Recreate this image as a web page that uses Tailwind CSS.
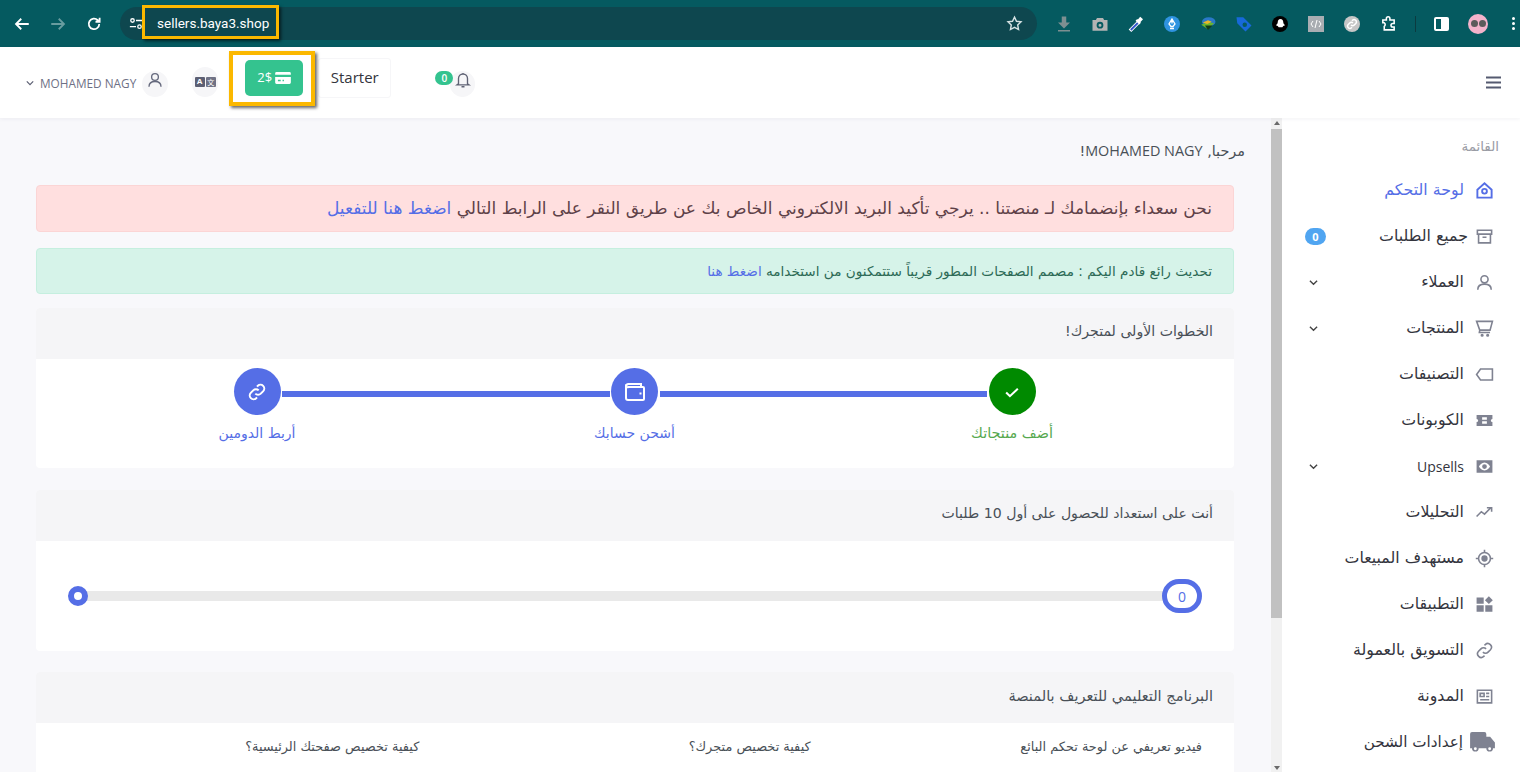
<!DOCTYPE html>
<html lang="ar">
<head>
  <meta charset="UTF-8" />
  <meta name="viewport" content="width=device-width, initial-scale=1.0" />
  <title>Baya3 - لوحة التحكم</title>
  <script src="https://cdn.jsdelivr.net/npm/@tailwindcss/browser@4"></script>
</head>
<body class="relative w-[1520px] h-[772px] overflow-hidden bg-white font-['Noto_Sans','DejaVu_Sans',sans-serif]">

  <!-- browser bar -->
  <div class="h-[47px] bg-[#055a60] flex items-center pl-[13px]">
    <svg class="w-[18px] h-[18px] text-white" viewBox="0 0 24 24" fill="none" stroke="currentColor" stroke-width="2.4"><path d="M21 12H4M11 5l-7 7 7 7"/></svg>
    <svg class="w-[18px] h-[18px] ml-[18px] text-white/40" viewBox="0 0 24 24" fill="none" stroke="currentColor" stroke-width="2.4"><path d="M3 12h17M13 5l7 7-7 7"/></svg>
    <svg class="w-[18px] h-[18px] ml-[18px] text-white" viewBox="0 0 24 24" fill="none" stroke="currentColor" stroke-width="2.4"><path d="M19 12a7 7 0 1 1-2-5l2 2M19.500 3.500V9H14"/></svg>
    <div class="ml-[17px] w-[917px] h-[33px] rounded-full bg-[#0e474f] flex items-center pl-[9px] pr-[14px]">
      <svg class="w-[14px] h-[14px] text-white" viewBox="0 0 16 16" fill="none" stroke="currentColor" stroke-width="1.500"><circle cx="4" cy="4" r="2"/><path d="M8 4h7M1 11h7"/><circle cx="12" cy="11" r="2"/></svg>
      <span class="ml-[14px] text-[13.500px] text-white font-['Roboto',sans-serif]">sellers.baya3.shop</span>
      <svg class="ml-auto w-[17px] h-[17px] text-[#d5e2e3]" viewBox="0 0 24 24" fill="none" stroke="currentColor" stroke-width="2"><path d="M12 3l2.800 5.900 6.400.8-4.700 4.400 1.200 6.400L12 17.400l-5.700 3.100 1.200-6.400L2.800 9.700l6.400-.8z"/></svg>
    </div>
    <div class="ml-[9px] grid grid-flow-col auto-cols-[36px] justify-items-center items-center">
      <svg class="w-[18px] h-[18px] text-[#7d8f91]" viewBox="0 0 24 24" fill="currentColor"><path d="M9 2h6v8h5l-8 8-8-8h5zM4 20h16v2H4z"/></svg>
      <svg class="w-[18px] h-[18px] text-[#b4b4b4]" viewBox="0 0 24 24" fill="currentColor"><path fill-rule="evenodd" d="M8 4h8l1.500 2.500H22V21H2V6.500h4.500zM12 9a4.500 4.500 0 1 0 0 9 4.500 4.500 0 0 0 0-9zm0 2.500a2 2 0 1 1 0 4 2 2 0 0 1 0-4z"/></svg>
      <svg class="w-[18px] h-[18px]" viewBox="0 0 24 24" fill="none"><path d="M4 21L15 10" stroke="#fff" stroke-width="5"/><path d="M5 20l10-10" stroke="#2f55c9" stroke-width="2.400"/><path d="M12.500 6.500l5 5" stroke="#fff" stroke-width="3"/><path d="M15.500 8.500l4-4.500" stroke="#fff" stroke-width="5"/></svg>
      <div class="w-4 h-4 rounded-full bg-[#2f93e0] flex items-center justify-center"><svg class="w-3 h-3" viewBox="0 0 12 12" fill="none" stroke="#fff" stroke-width="1.300"><path d="M6 1l3 5-2 2.500H5L3 6zM6 5.500V1M4 10.500h4"/></svg></div>
      <svg class="w-[18px] h-[18px]" viewBox="0 0 24 24"><ellipse cx="13" cy="9" rx="9" ry="6" fill="#2a78c8"/><path d="M3 13l9-4 8 2-8 8z" fill="#68b52e"/><path d="M8 14h10l-6 6z" fill="#123d18"/><path d="M5 10l7-3 5 2-6 3z" fill="#e6b62a"/></svg>
      <svg class="w-[18px] h-[18px] text-[#1769d9]" viewBox="0 0 24 24" fill="currentColor"><path fill-rule="evenodd" d="M2 3h9l11 11-8 8L3 11zm11 7a3 3 0 1 0 0 6 3 3 0 0 0 0-6z"/></svg>
      <div class="w-4 h-4 rounded-full bg-black flex items-center justify-center"><svg class="w-[11px] h-[11px]" viewBox="0 0 12 12" fill="#fff"><path d="M6 1c2 0 3 1.500 3 3.500 0 2 2 3 2 3.500l-2 .6-1 1.400H4L3 8.600 1 8c0-.5 2-1.500 2-3.500S4 1 6 1z"/></svg></div>
      <div class="w-4 h-4 bg-[#a9adb2] flex items-center justify-center text-white"><svg class="w-3 h-3" viewBox="0 0 12 12" fill="none" stroke="currentColor" stroke-width="1"><path d="M3 3L1 6l2 3M9 3l2 3-2 3M7 2L5 10"/></svg></div>
      <div class="w-4 h-4 rounded-full bg-[#c6c6c6] flex items-center justify-center text-white"><svg class="w-3 h-3" viewBox="0 0 24 24" fill="none" stroke="currentColor" stroke-width="3"><path d="M10 14a4.500 4.500 0 0 0 6.500 0l3-3A4.600 4.600 0 0 0 13 4.500l-1 1"/><path d="M14 10a4.500 4.500 0 0 0-6.500 0l-3 3a4.600 4.600 0 0 0 6.500 6.500l1-1"/></svg></div>
      <svg class="w-[17px] h-[17px] text-white" viewBox="0 0 24 24" fill="none" stroke="currentColor" stroke-width="2.200"><path d="M4 7h5V5a2.500 2.500 0 0 1 5 0v2h6v5h-2a2.500 2.500 0 0 0 0 5h2v4H6v-5a3 3 0 0 0 0-5H4z"/></svg>
    </div>
    <div class="ml-[9px] w-px h-4 bg-[#0b3b40]"></div>
    <div class="ml-[18px] w-[15px] h-[14px] border-2 border-white rounded-[2px] flex justify-end"><div class="w-[6px] bg-white"></div></div>
    <div class="ml-[19px] w-5 h-5 rounded-full bg-[#f3b3cb] flex items-center justify-center gap-px"><span class="w-[7px] h-[7px] rounded-full bg-[#5b5b5b]"></span><span class="w-[7px] h-[7px] rounded-full bg-[#5b5b5b]"></span></div>
    <div class="ml-[24px] flex flex-col gap-[2px]"><span class="w-[3px] h-[3px] rounded-full bg-white"></span><span class="w-[3px] h-[3px] rounded-full bg-white"></span><span class="w-[3px] h-[3px] rounded-full bg-white"></span></div>
  </div>

  <!-- app header -->
  <header class="relative z-10 h-[71px] bg-white shadow-[0_1px_4px_rgba(40,40,80,0.06)] flex items-start pl-[26px] pr-[19px]">
    <svg class="mt-[32px] w-2 h-2 text-[#5c5f73]" viewBox="0 0 10 10" fill="none" stroke="currentColor" stroke-width="1.500"><path d="M1 3l4 4 4-4"/></svg>
    <span class="ml-[6px] mt-[27px] text-[11.800px] leading-[18px] text-[#6e7085] font-['Open_Sans',sans-serif]">MOHAMED NAGY</span>
    <div class="ml-[6px] mt-[24px] w-[26px] h-[26px] rounded-full bg-[#f6f6f8] flex justify-center">
      <svg class="w-[18px] h-[18px] text-[#666a7e]" viewBox="0 0 24 24" fill="none" stroke="currentColor" stroke-width="1.800"><circle cx="12" cy="8" r="4.500"/><path d="M4 21c0-5 3.500-7 8-7s8 2 8 7"/></svg>
    </div>
    <div class="ml-[24px] mt-[20px] w-[26px] h-[30px] rounded-full bg-[#f6f6f8] flex items-center justify-center gap-px">
      <span class="w-[10px] h-[10px] bg-[#5c5f73] rounded-[1px] text-white text-[8px] leading-[10px] text-center font-bold font-['Liberation_Sans',sans-serif]">A</span>
      <span class="w-[10px] h-[10px] bg-[#6f7285] rounded-[1px] text-white text-[7px] leading-[10px] text-center font-['Noto_Sans_CJK_SC',sans-serif]">文</span>
    </div>
    <div class="ml-[27px] mt-[13px] w-[58px] h-[36px] rounded-[5px] bg-[#34c38f] flex items-center justify-center gap-[3px] text-white">
      <span class="text-[13px] font-['Open_Sans',sans-serif]">2$</span>
      <svg class="w-[16px] h-[12px]" viewBox="0 0 17 13" fill="currentColor"><path fill-rule="evenodd" d="M1.500 0h14A1.500 1.500 0 0 1 17 1.500V3H0V1.500A1.500 1.500 0 0 1 1.500 0zM0 5.500h17v6a1.500 1.500 0 0 1-1.500 1.500h-14A1.500 1.500 0 0 1 0 11.500zM3 8.500V10h3V8.500zm5 0V10h1.500V8.500z"/></svg>
    </div>
    <div class="ml-[15px] mt-[11px] w-[73px] h-[40px] pb-[2px] rounded-[3px] border border-[#f6f6f8] flex items-center justify-center text-[15px] text-[#33343d] font-['Open_Sans',sans-serif]">Starter</div>
    <div class="relative ml-[59px] mt-[24px] w-[25px] h-[26px] rounded-full bg-[#f6f6f8] flex justify-center">
      <svg class="w-[18px] h-[18px] text-[#5f6274]" viewBox="0 0 24 24" fill="none" stroke="currentColor" stroke-width="1.800"><path d="M6 17V10a6 6 0 0 1 12 0v7l2 1.500H4zM10 21h4M12 4V2.500"/></svg>
      <span class="absolute left-[-15px] top-0 w-[18px] h-[14px] rounded-full bg-[#34c38f] text-white text-[10px] leading-[14px] font-semibold text-center font-['Open_Sans',sans-serif]">0</span>
    </div>
    <svg class="ml-auto mt-[29px] w-[15px] h-[13px] text-[#555a70]" viewBox="0 0 15 13" fill="none" stroke="currentColor" stroke-width="2"><path d="M0 1.500h15M0 6.500h15M0 11.500h15"/></svg>
  </header>

  <div class="flex h-[654px]">
    <!-- main column -->
    <main dir="rtl" class="w-[1271px] bg-[#f8f8fb] overflow-hidden pr-[37px] pl-[36px] pt-[24px] font-['DejaVu_Sans',sans-serif]">
      <p class="mr-[-11px] text-[14.400px] leading-[18px] text-[#495057]">مرحبا, <span class="font-['Open_Sans',sans-serif]">MOHAMED NAGY</span>!</p>

      <div class="mt-[25px] h-[47px] rounded-[4px] border border-[#fbd5d5] bg-[#ffdfdf] flex items-center px-[21px] text-[17px] text-[#5e4148] whitespace-nowrap">
        <span>نحن سعداء بإنضمامك لـ منصتنا .. يرجي تأكيد البريد الالكتروني الخاص بك عن طريق النقر على الرابط التالي <a class="text-[#556ee6]">اضغط هنا للتفعيل</a></span>
      </div>
      <div class="mt-[16px] h-[46px] rounded-[4px] border border-[#c5efdf] bg-[#d6f3e9] flex items-center px-[21px] text-[13.600px] text-[#2d6a56] whitespace-nowrap">
        <span>تحديث رائع قادم اليكم : مصمم الصفحات المطور قريباً ستتمكنون من استخدامه <a class="text-[#556ee6]">اضغط هنا</a></span>
      </div>

      <section class="mt-[14px] rounded-[4px] overflow-hidden bg-white">
        <h2 class="h-[51px] pb-[4px] bg-[#f5f5f7] flex items-center px-[21px] text-[14.100px] text-[#495057]">الخطوات الأولى لمتجرك!</h2>
        <div class="h-[109px] pr-[222px] pl-[221px] pt-[9px] flex items-start">
          <div class="w-[0px] flex flex-col items-center">
            <div class="w-[47px] h-[47px] shrink-0 rounded-full bg-[#008a00] flex items-center justify-center text-white">
              <svg class="w-[20px] h-[20px]" viewBox="0 0 24 24" fill="none" stroke="currentColor" stroke-width="2.500"><path d="M5 12.500l4.500 4.500L19 8"/></svg>
            </div>
            <span class="mt-[8px] text-[14.400px] text-[#55a84e] whitespace-nowrap">أضف منتجاتك</span>
          </div>
          <div class="flex-1 h-[6px] mt-[23px] mx-[25px] bg-[#556ee6]"></div>
          <div class="w-[0px] flex flex-col items-center">
            <div class="w-[47px] h-[47px] shrink-0 rounded-full bg-[#556ee6] flex items-center justify-center text-white">
              <svg class="w-[24px] h-[24px]" viewBox="0 0 24 24" fill="none" stroke="currentColor" stroke-width="2"><path d="M3 6.500A2.500 2.500 0 0 1 5.500 4H18v3M3 6.500V18a2 2 0 0 0 2 2h15a1 1 0 0 0 1-1V8a1 1 0 0 0-1-1H5.500A2.500 2.500 0 0 1 3 6.500z"/><path d="M17.500 12.500v2"/></svg>
            </div>
            <span class="mt-[8px] text-[14px] text-[#556ee6] whitespace-nowrap">أشحن حسابك</span>
          </div>
          <div class="flex-1 h-[6px] mt-[23px] mx-[25px] bg-[#556ee6]"></div>
          <div class="w-[0px] flex flex-col items-center">
            <div class="w-[47px] h-[47px] shrink-0 rounded-full bg-[#556ee6] flex items-center justify-center text-white">
              <svg class="w-[20px] h-[20px]" viewBox="0 0 24 24" fill="none" stroke="currentColor" stroke-width="2.400"><path d="M10 14a4.500 4.500 0 0 0 6.500 0l3-3A4.600 4.600 0 0 0 13 4.500l-1 1"/><path d="M14 10a4.500 4.500 0 0 0-6.500 0l-3 3a4.600 4.600 0 0 0 6.500 6.500l1-1"/></svg>
            </div>
            <span class="mt-[8px] text-[14px] text-[#556ee6] whitespace-nowrap">أربط الدومين</span>
          </div>
        </div>
      </section>

      <section class="mt-[22px] rounded-[4px] overflow-hidden bg-white">
        <h2 class="h-[51px] pb-[4px] bg-[#f5f5f7] flex items-center px-[21px] text-[14.100px] text-[#495057]">أنت على استعداد للحصول على أول 10 طلبات</h2>
        <div class="h-[110px] pt-[50px] pl-[33px] pr-[32px]">
          <div class="relative h-[10px] bg-[#e9e9e9] rounded-full mx-[10px]">
            <span class="absolute right-[-10px] top-[-12px] w-[40px] h-[34px] rounded-full border-[5px] border-[#556ee6] bg-white flex items-center justify-center text-[14px] text-[#556ee6] font-['Open_Sans',sans-serif]">0</span>
            <span class="absolute left-[-11px] top-[-5px] w-[20px] h-[20px] rounded-full border-[6px] border-[#556ee6] bg-white"></span>
          </div>
        </div>
      </section>

      <section class="mt-[21px] rounded-[4px] overflow-hidden bg-white">
        <h2 class="h-[51px] pb-[4px] bg-[#f5f5f7] flex items-center px-[21px] text-[14.600px] text-[#495057]">البرنامج التعليمي للتعريف بالمنصة</h2>
        <div class="h-[60px] grid grid-cols-3 pt-[14px] text-[12.900px] text-[#495057]">
          <span class="pr-[32px]">فيديو تعريفي عن لوحة تحكم البائع</span>
          <span class="pr-[24px]">كيفية تخصيص متجرك؟</span>
          <span class="pr-[16px]">كيفية تخصيص صفحتك الرئيسية؟</span>
        </div>
      </section>
    </main>

    <!-- page scrollbar -->
    <div class="w-[11px] bg-[#f1f1f1] flex flex-col items-center">
      <span class="mt-[3px] w-0 h-0 border-x-[3px] border-x-transparent border-b-[4px] border-b-[#6a6a6a]"></span>
      <div class="mt-[4px] w-full h-[489px] bg-[#c1c1c1]"></div>
      <span class="mt-auto mb-[2px] w-0 h-0 border-x-[3px] border-x-transparent border-t-[4px] border-t-[#6a6a6a]"></span>
    </div>

    <!-- sidebar -->
    <aside dir="rtl" class="flex-1 bg-white pt-[19px] font-['DejaVu_Sans',sans-serif] text-[15.800px] text-[#33343d]">
      <p class="pr-[21px] text-[13.500px] leading-[18px] text-[#9a9ca5] pb-[12px]">القائمة</p>
      <nav class="flex flex-col pr-[26px]">
        <a class="h-[46px] flex items-center gap-[11px] text-[#556ee6]">
          <svg class="w-[19px] h-[19px] shrink-0" viewBox="0 0 24 24" fill="none" stroke="currentColor" stroke-width="2.400"><path d="M3 11l9-8 9 8v10H3z"/><circle cx="12" cy="13" r="3"/></svg>
          <span>لوحة التحكم</span>
        </a>
        <a class="h-[46px] flex items-center gap-[7px]">
          <svg class="w-[19px] h-[19px] shrink-0 text-[#7f8291]" viewBox="0 0 24 24" fill="none" stroke="currentColor" stroke-width="2"><path d="M3 4h18v5H3zM4.500 9v11h15V9M9.500 13h5"/></svg>
          <span>جميع الطلبات</span>
          <span class="mr-auto ml-[23px] w-[21px] h-[17px] rounded-full bg-[#50a5f1] text-white text-[11px] leading-[17px] font-bold text-center font-['Open_Sans',sans-serif]">0</span>
        </a>
        <a class="h-[46px] flex items-center gap-[11px]">
          <svg class="w-[19px] h-[19px] shrink-0 text-[#7f8291]" viewBox="0 0 24 24" fill="none" stroke="currentColor" stroke-width="2"><circle cx="12" cy="8" r="4.500"/><path d="M3.500 21c0-5 3.500-7 8.500-7s8.500 2 8.500 7"/></svg>
          <span>العملاء</span>
          <svg class="mr-auto ml-[27px] w-[9px] h-[9px] text-[#444]" viewBox="0 0 10 10" fill="none" stroke="currentColor" stroke-width="1.500"><path d="M1 3l4 4 4-4"/></svg>
        </a>
        <a class="h-[46px] flex items-center gap-[11px]">
          <svg class="w-[19px] h-[19px] shrink-0 text-[#7f8291]" viewBox="0 0 24 24" fill="none" stroke="currentColor" stroke-width="2"><path d="M2 3h20l-3 11H6zM6 14l-.5 3H19"/><circle cx="9" cy="20.500" r="1" fill="currentColor"/><circle cx="16" cy="20.500" r="1" fill="currentColor"/></svg>
          <span>المنتجات</span>
          <svg class="mr-auto ml-[27px] w-[9px] h-[9px] text-[#444]" viewBox="0 0 10 10" fill="none" stroke="currentColor" stroke-width="1.500"><path d="M1 3l4 4 4-4"/></svg>
        </a>
        <a class="h-[46px] flex items-center gap-[11px]">
          <svg class="w-[19px] h-[19px] shrink-0 text-[#7f8291]" viewBox="0 0 24 24" fill="none" stroke="currentColor" stroke-width="2"><path d="M7 5h15v14H7l-5-7z"/></svg>
          <span>التصنيفات</span>
        </a>
        <a class="h-[46px] flex items-center gap-[11px]">
          <svg class="w-[19px] h-[19px] shrink-0 text-[#7f8291]" viewBox="0 0 24 24" fill="currentColor"><path fill-rule="evenodd" d="M2 5h20v5a2 2 0 0 0 0 4v5H2v-5a2 2 0 0 0 0-4zm7 3v3h6V8zm0 5v3h6v-3z"/></svg>
          <span>الكوبونات</span>
        </a>
        <a class="h-[46px] flex items-center gap-[11px]">
          <svg class="w-[19px] h-[19px] shrink-0 text-[#7f8291]" viewBox="0 0 24 24" fill="currentColor"><path fill-rule="evenodd" d="M2 4h20v16H2zm10 3c-3.500 0-6 3-7 5 1 2 3.500 5 7 5s6-3 7-5c-1-2-3.500-5-7-5zm0 2a3 3 0 1 1 0 6 3 3 0 0 1 0-6z"/></svg>
          <span class="text-[14px] font-['Open_Sans',sans-serif]">Upsells</span>
          <svg class="mr-auto ml-[27px] w-[9px] h-[9px] text-[#444]" viewBox="0 0 10 10" fill="none" stroke="currentColor" stroke-width="1.500"><path d="M1 3l4 4 4-4"/></svg>
        </a>
        <a class="h-[46px] flex items-center gap-[11px]">
          <svg class="w-[19px] h-[19px] shrink-0 text-[#7f8291]" viewBox="0 0 24 24" fill="none" stroke="currentColor" stroke-width="2"><path d="M2 17l6-6 4 3 8-8M15 6h6v5"/></svg>
          <span>التحليلات</span>
        </a>
        <a class="h-[46px] flex items-center gap-[11px]">
          <svg class="w-[19px] h-[19px] shrink-0 text-[#7f8291]" viewBox="0 0 24 24" fill="none" stroke="currentColor" stroke-width="2"><circle cx="12" cy="12" r="7.500"/><circle cx="12" cy="12" r="3" fill="currentColor"/><path d="M12 1v3M12 20v3M1 12h3M20 12h3"/></svg>
          <span>مستهدف المبيعات</span>
        </a>
        <a class="h-[46px] flex items-center gap-[11px]">
          <svg class="w-[19px] h-[19px] shrink-0 text-[#7f8291]" viewBox="0 0 24 24" fill="currentColor"><path d="M2 3h9v8H2zM2 13h9v8H2zM13 13h9v8h-9zM17.500 1.500l5 5-5 5-5-5z"/></svg>
          <span>التطبيقات</span>
        </a>
        <a class="h-[46px] flex items-center gap-[11px]">
          <svg class="w-[19px] h-[19px] shrink-0 text-[#7f8291]" viewBox="0 0 24 24" fill="none" stroke="currentColor" stroke-width="2"><path d="M10 14a4.500 4.500 0 0 0 6.500 0l3-3A4.600 4.600 0 0 0 13 4.500l-1 1"/><path d="M14 10a4.500 4.500 0 0 0-6.500 0l-3 3a4.600 4.600 0 0 0 6.500 6.500l1-1"/></svg>
          <span>التسويق بالعمولة</span>
        </a>
        <a class="h-[46px] flex items-center gap-[11px]">
          <svg class="w-[19px] h-[19px] shrink-0 text-[#7f8291]" viewBox="0 0 24 24" fill="none" stroke="currentColor" stroke-width="2"><path d="M3 4h18v16H3zM6.500 8h5v4h-5zM14 8h4M14 12h4M6.500 16h11.500"/></svg>
          <span>المدونة</span>
        </a>
        <a class="h-[47px] flex items-center gap-[7px] mr-[-1px]">
          <svg class="w-[25px] h-[21px] shrink-0 text-[#7f8291]" viewBox="0 0 26 22" fill="currentColor"><path d="M0 2a2 2 0 0 1 2-2h13a2 2 0 0 1 2 2v3h4l5 6v6h-2a3.500 3.500 0 0 1-7 0H9a3.500 3.500 0 0 1-7 0H0z"/><circle cx="5.500" cy="17.500" r="1.500" fill="#fff"/><circle cx="20.500" cy="17.500" r="1.500" fill="#fff"/></svg>
          <span class="text-[15.200px]">إعدادات الشحن</span>
        </a>
      </nav>
    </aside>
  </div>

  <!-- annotation boxes drawn over the screenshot -->
  <div class="absolute z-20 left-[142px] top-[5px] w-[137px] h-[34px] border-[3px] border-[#fbb800] shadow-[2px_2px_3px_rgba(0,0,0,0.6)]"></div>
  <div class="absolute z-20 left-[229px] top-[51px] w-[86px] h-[55px] border-[4px] border-[#fbb800] shadow-[2px_2px_3px_rgba(0,0,0,0.6)]"></div>
</body>
</html>
